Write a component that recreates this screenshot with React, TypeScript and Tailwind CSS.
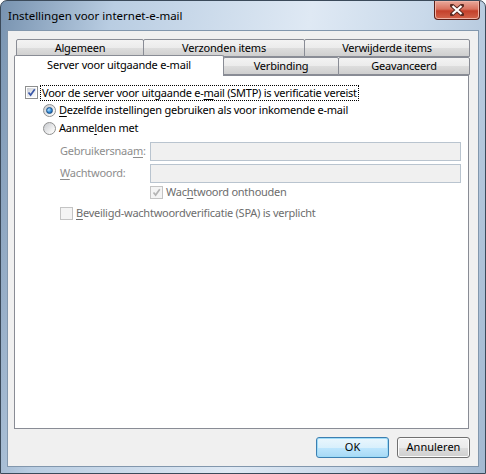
import { ReactNode } from 'react';

const FONT = "font-['Segoe_UI','Noto_Sans',sans-serif]";

const CheckBox = ({ checked, disabled }: { checked?: boolean; disabled?: boolean }) => (
  <div
    className={`flex h-[13px] w-[13px] shrink-0 items-center justify-center border ${
      disabled ? 'border-[#c4c4c4] bg-[#f4f4f4]' : 'border-[#8e8f8f] bg-white'
    }`}
  >
    <div
      className={`flex h-[9px] w-[9px] items-center justify-center ${
        disabled
          ? 'bg-[#f4f4f4]'
          : 'bg-[linear-gradient(135deg,#c9ccd3,#eeeff1_60%,#fafafa)]'
      }`}
    >
      {checked && (
        <svg width="9" height="9" viewBox="0 0 9 9" aria-hidden="true">
          <path
            d="M1.5 4.5 L3.6 7 L7.8 1.2"
            fill="none"
            stroke={disabled ? '#b4b4b4' : '#3c58a8'}
            strokeWidth="1.7"
          />
        </svg>
      )}
    </div>
  </div>
);

const Radio = ({ checked }: { checked?: boolean }) => (
  <div className="flex h-[13px] w-[13px] shrink-0 items-center justify-center rounded-full border border-[#8e8f8f] bg-[linear-gradient(135deg,#c6c9ce,#f3f3f3_70%,#ffffff)]">
    {checked && (
      <div className="h-[7px] w-[7px] rounded-full border border-[#1a4f86] bg-[radial-gradient(circle_at_35%_35%,#b5e0ff,#2f88d4_55%,#0d4f95)]" />
    )}
  </div>
);

const Tab = ({
  label,
  width,
  selected,
}: {
  label: string;
  width: number;
  selected?: boolean;
}) => (
  <div
    style={{ width }}
    className={`flex shrink-0 items-center justify-center rounded-t-[2px] border border-[#898c95] text-[11px] tracking-[-0.2px] text-black ${
      selected
        ? 'relative z-10 -mt-[2px] -mb-px h-[21px] border-b-0 bg-white pb-[2px]'
        : 'h-[18px] -ml-px first:ml-0 bg-[linear-gradient(#f3f3f3,#ebebeb_50%,#dddddd_51%,#cfcfcf)]'
    }`}
  >
    {label}
  </div>
);

const U = ({ children }: { children: ReactNode }) => <span className="underline underline-offset-2">{children}</span>;

const Button = ({ children, primary }: { children: ReactNode; primary?: boolean }) => (
  <div
    className={`flex h-[21px] w-[73px] items-center justify-center rounded-[3px] border text-[11px] text-black ${
      primary
        ? 'border-[#3c7fb1] bg-[linear-gradient(#eaf6fd,#d9f0fc_50%,#bee6fd_51%,#a7d9f5)] shadow-[inset_0_0_0_1px_#9fdcf8]'
        : 'border-[#707070] bg-[linear-gradient(#f2f2f2,#ebebeb_50%,#dddddd_51%,#cfcfcf)] shadow-[inset_0_0_0_1px_#fcfcfc]'
    }`}
  >
    {children}
  </div>
);

export default function App() {
  return (
    <div
      className={`${FONT} flex h-[474px] w-[486px] flex-col overflow-hidden rounded-t-[7px] border border-[#3b4a5a] bg-[linear-gradient(100deg,#7893b0,#b9cde2_20%,#dfe9f4_55%,#c9d9ea_75%,#a3b9d1)]`}
    >
      {/* title bar */}
      <div className="flex h-[29px] shrink-0 items-start justify-between">
        <div className="pl-[7px] pt-[6px] text-[11.5px] text-black">Instellingen voor internet-e-mail</div>
        <div className="mr-[5px] flex h-[19px] w-[46px] items-center justify-center rounded-b-[4px] border border-t-0 border-[#5b2019] bg-[linear-gradient(#e9a99b,#d9725f_45%,#c4402b_55%,#d3654c)] shadow-[inset_0_0_0_1px_#f0b3a6]">
          <svg width="14" height="12" viewBox="0 0 14 12" aria-hidden="true">
            <path d="M2 1.5 L12 10.5 M12 1.5 L2 10.5" stroke="#5b2a22" strokeWidth="4" strokeLinecap="square" />
            <path d="M2.5 2 L11.5 10 M11.5 2 L2.5 10" stroke="#ffffff" strokeWidth="2.2" />
          </svg>
        </div>
      </div>

      {/* client area */}
      <div className="mx-[6px] mb-[7px] flex flex-1 flex-col border border-[#8297ad] bg-[#f0f0f0]">
        <div className="ml-[6px] mr-[9px] mt-[8px] flex flex-1 flex-col">
          {/* back row */}
          <div className="flex pl-[2px]">
            <Tab label="Algemeen" width={128} />
            <Tab label="Verzonden items" width={162} />
            <Tab label="Verwijderde items" width={166} />
          </div>
          {/* front row */}
          <div className="flex">
            <Tab label="Server voor uitgaande e-mail" width={210} selected />
            <Tab label="Verbinding" width={116} />
            <Tab label="Geavanceerd" width={132} />
          </div>
          {/* page */}
          <div className="flex h-[354px] flex-col border border-[#898c95] bg-white text-[11px] tracking-[-0.25px]">
            <div className="mt-[8px] flex h-[17px] items-center pl-[10px] text-black">
              <CheckBox checked />
              <span className="ml-[2px] border border-dotted border-black px-[1px] leading-[14px]">
                Voor de server voor uitgaande e-<U>m</U>ail (SMTP) is verificatie vereist
              </span>
            </div>
            <div className="mt-[1px] flex h-[17px] items-center gap-[3px] pl-[28px] text-black">
              <Radio checked />
              <span>
                <U>D</U>ezelfde instellingen gebruiken als voor inkomende e-mail
              </span>
            </div>
            <div className="mt-[1px] flex h-[17px] items-center gap-[3px] pl-[28px] text-black">
              <Radio />
              <span>
                Aanme<U>l</U>den met
              </span>
            </div>
            <div className="mt-[5px] flex items-center pl-[45px] pr-[7px]">
              <span className="w-[90px] text-[#8d8d8d]">
                Gebruikersnaa<U>m</U>:
              </span>
              <div className="h-[19px] flex-1 border border-[#b9c4cf] bg-[#f0f0f0]" />
            </div>
            <div className="mt-[3px] flex items-center pl-[45px] pr-[7px]">
              <span className="w-[90px] text-[#8d8d8d]">
                <U>W</U>achtwoord:
              </span>
              <div className="h-[19px] flex-1 border border-[#b9c4cf] bg-[#f0f0f0]" />
            </div>
            <div className="mt-[1px] flex h-[17px] items-center gap-[3px] pl-[135px] text-[#6d6d6d]">
              <CheckBox checked disabled />
              <span>
                Wac<U>h</U>twoord onthouden
              </span>
            </div>
            <div className="mt-[4px] flex h-[17px] items-center gap-[3px] pl-[45px] text-[#6d6d6d]">
              <CheckBox disabled />
              <span>
                <U>B</U>eveiligd-wachtwoordverificatie (SPA) is verplicht
              </span>
            </div>
          </div>
          {/* buttons */}
          <div className="mt-[8px] mb-[8px] flex justify-end gap-[8px] -mr-px">
            <Button primary>OK</Button>
            <Button>Annuleren</Button>
          </div>
        </div>
      </div>
    </div>
  );
}
